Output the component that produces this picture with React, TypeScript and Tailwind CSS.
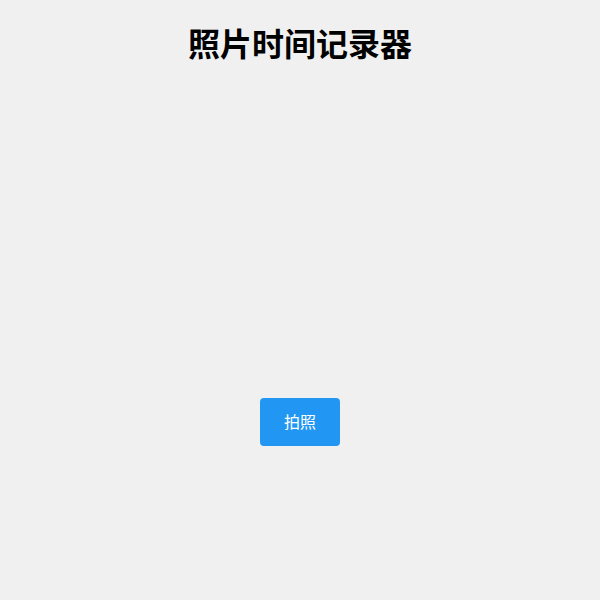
export default function App() {
  return (
    <div
      className="min-h-[600px] bg-[#f0f0f0] flex flex-col items-center pt-5"
      style={{ fontFamily: '"Noto Sans", "Noto Sans CJK SC", sans-serif' }}
    >
      <h1 className="text-[32px] leading-[48px] font-bold text-black">照片时间记录器</h1>

      {/* camera preview area */}
      <div className="h-[330px] w-full" />

      <button className="w-20 h-12 rounded bg-[#2196f3] text-white text-base">拍照</button>
    </div>
  )
}
